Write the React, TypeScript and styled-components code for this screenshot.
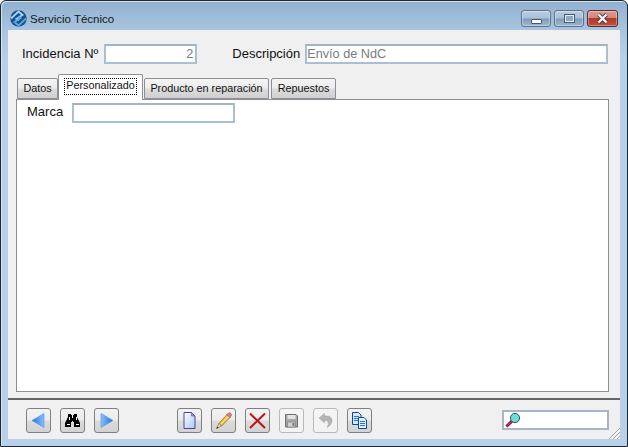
import React from "react";
import styled, { createGlobalStyle } from "styled-components";

const Global = createGlobalStyle`
  html, body { margin: 0; padding: 0; background: #fff; }
  body { width: 628px; height: 447px; overflow: hidden; font-family: "Liberation Sans", Arial, sans-serif; }
`;

const Win = styled.div`
  box-sizing: border-box;
  width: 628px;
  height: 447px;
  display: flex;
  flex-direction: column;
  border: 1px solid #1c2a33;
  border-radius: 6px 6px 0 0;
  background: linear-gradient(180deg, #92b0cf 0, #a9c5df 30px, #b9d1e8 60px, #b9d1e8 100%);
  box-shadow: inset 1px 1px 0 #d6e4f0;
  padding: 0 7px 7px;
`;

const TitleBar = styled.div`
  height: 29px;
  flex: none;
  display: flex;
  align-items: flex-start;
`;

const TitleLogo = styled.svg`
  width: 17px;
  height: 17px;
  margin: 9px 3px 0 2px;
  flex: none;
`;

const TitleText = styled.div`
  font-size: 11.5px;
  line-height: 14px;
  margin-top: 11px;
  color: #101820;
`;

const Caption = styled.div`
  margin-left: auto;
  display: flex;
  gap: 3px;
  margin-top: 9px;
  margin-right: 2px;
`;

const CapBtn = styled.div<{ $close?: boolean }>`
  box-sizing: border-box;
  width: ${(p) => (p.$close ? 31 : 30)}px;
  height: 17px;
  border: 1px solid ${(p) => (p.$close ? "#5a2a2e" : "#5d7288")};
  border-radius: 3px;
  background: ${(p) =>
    p.$close
      ? "linear-gradient(180deg,#dc9c90 0,#d08878 45%,#b53a26 50%,#b8513e 100%)"
      : "linear-gradient(180deg,#b9cde0 0,#a8c0d8 48%,#7f9cbb 52%,#9cb8d4 100%)"};
  box-shadow: inset 0 0 0 1px rgba(255, 255, 255, 0.35);
  display: flex;
  align-items: center;
  justify-content: center;
`;

const MinGlyph = styled.div`
  width: 9px;
  height: 3px;
  margin-top: 5px;
  background: #fff;
  border: 1px solid #46586c;
  border-radius: 1px;
`;

const MaxGlyph = styled.div`
  box-sizing: border-box;
  width: 11px;
  height: 9px;
  margin-top: -1px;
  border: 2px solid #e8eef4;
  outline: 1px solid #46586c;
  outline-offset: -1px;
  background: #8fa9c4;
`;

const Client = styled.div`
  flex: 1;
  position: relative;
  display: flex;
  flex-direction: column;
  background: #f0f0f0;
  min-height: 0;
`;

const HeaderRow = styled.div`
  height: 39px;
  flex: none;
  display: flex;
  align-items: flex-start;
  padding: 14px 12px 0 14px;
  box-sizing: border-box;
`;

const FieldLabel = styled.label<{ $gap: number; $lead?: number; $lh?: number }>`
  font-size: 13px;
  line-height: ${(p) => p.$lh ?? 19}px;
  color: #111;
  margin-left: ${(p) => p.$lead ?? 0}px;
  margin-right: ${(p) => p.$gap}px;
  white-space: nowrap;
`;

const Field = styled.div<{ $w: number; $right?: boolean }>`
  box-sizing: border-box;
  width: ${(p) => p.$w}px;
  height: 20px;
  flex: none;
  border: 2px solid #a9bfd8;
  border-top-color: #a3b2c6;
  background: #fff;
  color: #7c7c7c;
  font-size: 12.7px;
  line-height: 16px;
  padding: 0 ${(p) => (p.$right ? 2 : 0)}px 0 ${(p) => (p.$right ? 2 : 0)}px;
  text-align: ${(p) => (p.$right ? "right" : "left")};
`;

const TabStrip = styled.div`
  height: 30px;
  flex: none;
  display: flex;
  align-items: flex-end;
  padding-left: 9px;
  position: relative;
  z-index: 1;
`;

const Tab = styled.div<{ $w: number; $active?: boolean; $gap?: number }>`
  box-sizing: border-box;
  width: ${(p) => p.$w}px;
  height: ${(p) => (p.$active ? 26 : 21)}px;
  margin-left: ${(p) => p.$gap ?? 0}px;
  margin-bottom: ${(p) => (p.$active ? -1 : 0)}px;
  border: 1px solid #8e8e96;
  border-bottom: ${(p) => (p.$active ? "none" : "1px solid #8e8e96")};
  border-radius: 2px 2px 0 0;
  background: ${(p) =>
    p.$active ? "#fff" : "linear-gradient(180deg,#f4f4f4 0,#ececec 45%,#dcdcdc 55%,#cfcfcf 100%)"};
  font-size: 10.8px;
  color: #111;
  display: flex;
  justify-content: center;
  align-items: flex-start;
  padding-top: 3px;
  white-space: nowrap;
`;

const TabFocus = styled.span`
  border: 1px dotted #000;
  padding: 0 1px 2px;
  line-height: 13px;
`;

const Panel = styled.div`
  box-sizing: border-box;
  height: 293px;
  flex: none;
  margin: 0 11px 0 8px;
  border: 1px solid #8e8e96;
  background: #fff;
  padding: 3px 0 0 10px;
  display: flex;
  align-items: flex-start;
`;

const Divider = styled.div`
  flex: none;
  height: 2px;
  margin-top: 6px;
  background: #666;
`;

const Toolbar = styled.div`
  flex: 1;
  display: flex;
  align-items: flex-start;
  padding: 8px 11px 0 18px;
`;

const Group = styled.div<{ $ml?: number }>`
  display: flex;
  gap: 9px;
  margin-left: ${(p) => p.$ml ?? 0}px;
`;

const ToolBtn = styled.button<{ $disabled?: boolean }>`
  box-sizing: border-box;
  width: 25px;
  height: 25px;
  padding: 0;
  border: 1px solid ${(p) => (p.$disabled ? "#b8b8b8" : "#7f7f7f")};
  border-radius: 3px;
  background: ${(p) =>
    p.$disabled
      ? "linear-gradient(180deg,#f5f5f5 0,#f2f2f2 100%)"
      : "linear-gradient(180deg,#f2f2f2 0,#ececec 48%,#dcdcdc 52%,#d2d2d2 100%)"};
  display: flex;
  align-items: center;
  justify-content: center;
`;

const Search = styled.div`
  box-sizing: border-box;
  margin-left: auto;
  margin-top: 2px;
  width: 107px;
  height: 20px;
  border: 2px solid #a9b4c4;
  background: #fff;
  display: flex;
  align-items: center;
  padding-left: 1px;
`;

const Grip = styled.svg`
  position: absolute;
  right: 0;
  bottom: 0;
  width: 12px;
  height: 12px;
`;

const Ico = styled.svg`
  display: block;
  width: 21px;
  height: 21px;
`;

export default function App() {
  return (
    <>
      <Global />
      <Win>
        <TitleBar>
          <TitleLogo viewBox="0 0 17 17">
            <circle cx="8.5" cy="8.5" r="8.2" fill="#17508f" />
            <path d="M1 8.5 L8.5 1.5 L12.5 5 L6.5 9 L9 10.5" fill="none" stroke="#a9d4f2" strokeWidth="1.9" />
            <path d="M16 8.5 L8.5 15.5 L4.5 12 L10.5 8 L8 6.5" fill="none" stroke="#5aa8e0" strokeWidth="1.9" />
          </TitleLogo>
          <TitleText>Servicio Técnico</TitleText>
          <Caption>
            <CapBtn><MinGlyph /></CapBtn>
            <CapBtn><MaxGlyph /></CapBtn>
            <CapBtn $close>
              <svg width="13" height="11" viewBox="0 0 13 11">
                <path d="M2.5 1.5 L10.5 9.5 M10.5 1.5 L2.5 9.5" stroke="#4c3a40" strokeWidth="4" />
                <path d="M2.5 1.5 L10.5 9.5 M10.5 1.5 L2.5 9.5" stroke="#f4f4f6" strokeWidth="2.4" />
              </svg>
            </CapBtn>
          </Caption>
        </TitleBar>
        <Client>
          <HeaderRow>
            <FieldLabel $gap={6}>Incidencia Nº</FieldLabel>
            <Field $w={93} $right>2</Field>
            <FieldLabel $gap={5} $lead={35}>Descripción</FieldLabel>
            <Field $w={303}>Envío de NdC</Field>
          </HeaderRow>
          <TabStrip>
            <Tab $w={41}>Datos</Tab>
            <Tab $w={85} $active><TabFocus>Personalizado</TabFocus></Tab>
            <Tab $w={125} $gap={1}>Producto en reparación</Tab>
            <Tab $w={65} $gap={2}>Repuestos</Tab>
          </TabStrip>
          <Panel>
            <FieldLabel $gap={9} $lh={17}>Marca</FieldLabel>
            <Field $w={163} />
          </Panel>
          <Divider />
          <Toolbar>
            <Group>
              <ToolBtn aria-label="Anterior">
                <Ico viewBox="0 0 21 21">
                  <defs>
                    <linearGradient id="arrowL" x1="0" y1="0" x2="1" y2="0">
                      <stop offset="0" stopColor="#1f74ea" />
                      <stop offset="1" stopColor="#8cc0f6" />
                    </linearGradient>
                  </defs>
                  <path d="M4 10.5 L16 3.5 V17.5 Z" fill="url(#arrowL)" stroke="#4a90e6" strokeWidth="0.6" />
                </Ico>
              </ToolBtn>
              <ToolBtn aria-label="Buscar">
                <Ico viewBox="0 0 21 21">
                  <path d="M6 4h3v1h1v3h1V5h1V4h3v3l3 6v4h-6v-5h-1v-1h-1v1H9v5H3v-4l3-6z" fill="#000" />
                  <rect x="5" y="14" width="3" height="1" fill="#fff" />
                  <rect x="14" y="14" width="3" height="1" fill="#fff" />
                  <rect x="7" y="7" width="1" height="3" fill="#fff" />
                  <rect x="14" y="7" width="1" height="3" fill="#fff" />
                </Ico>
              </ToolBtn>
              <ToolBtn aria-label="Siguiente">
                <Ico viewBox="0 0 21 21">
                  <defs>
                    <linearGradient id="arrowR" x1="0" y1="0" x2="1" y2="0">
                      <stop offset="0" stopColor="#8cc0f6" />
                      <stop offset="1" stopColor="#1f74ea" />
                    </linearGradient>
                  </defs>
                  <path d="M17 10.5 L5 3.5 V17.5 Z" fill="url(#arrowR)" stroke="#4a90e6" strokeWidth="0.6" />
                </Ico>
              </ToolBtn>
            </Group>
            <Group $ml={58}>
              <ToolBtn aria-label="Nuevo">
                <Ico viewBox="0 0 21 21">
                  <defs>
                    <linearGradient id="doc" x1="0" y1="0" x2="1" y2="1">
                      <stop offset="0" stopColor="#fff" />
                      <stop offset="1" stopColor="#a8c8f0" />
                    </linearGradient>
                  </defs>
                  <path d="M5 2.5 H12.5 L16 6 V18.5 H5 Z" fill="url(#doc)" stroke="#5040a0" strokeWidth="1" />
                  <path d="M12.5 2.5 V6 H16 Z" fill="#8f9fe0" stroke="#5040a0" strokeWidth="0.6" />
                </Ico>
              </ToolBtn>
              <ToolBtn aria-label="Editar">
                <Ico viewBox="0 0 21 21">
                  <path d="M6 13.5 L14 4.5 L17 7.5 L8.5 16 Z" fill="#f6c04a" stroke="#7a5a20" strokeWidth="0.7" />
                  <path d="M8 14 L15.5 6" stroke="#fbe79a" strokeWidth="1" />
                  <path d="M14 4.5 L15.5 3 Q17 2.5 18 3.5 Q19 5 18 6 L17 7.5 Z" fill="#e8808a" stroke="#8a4a50" strokeWidth="0.6" />
                  <path d="M6 13.5 L8.5 16 L3.5 18.5 Z" fill="#f3dcae" stroke="#7a5a20" strokeWidth="0.6" />
                  <path d="M3.5 18.5 L4.3 16.5 L5.5 17.5 Z" fill="#222" />
                </Ico>
              </ToolBtn>
              <ToolBtn aria-label="Borrar">
                <Ico viewBox="0 0 21 21">
                  <path d="M3 3.5 L18 18 M18 3.5 L3 18" stroke="#c01018" strokeWidth="2" />
                </Ico>
              </ToolBtn>
              <ToolBtn $disabled aria-label="Guardar">
                <Ico viewBox="0 0 21 21">
                  <path d="M4.5 4.5 H15 L16.5 6 V17 H4.5 Z" fill="#a8a8a8" stroke="#6e6e6e" />
                  <rect x="6.5" y="5" width="8" height="4" fill="#e4e4e4" />
                  <rect x="6.5" y="12" width="8" height="5" fill="#d0d0d0" stroke="#777" strokeWidth="0.6" />
                  <rect x="11.5" y="13" width="2" height="3" fill="#777" />
                </Ico>
              </ToolBtn>
              <ToolBtn $disabled aria-label="Deshacer">
                <Ico viewBox="0 0 21 21">
                  <path d="M4 8 L9.5 3.5 V6 H13 Q17.5 7 17 11.5 Q16.5 15 12 17.5 Q14 14 13 12 Q12 10 9.5 10.5 V13 Z" fill="#b4b4b4" stroke="#a0a0a0" strokeWidth="0.5" />
                </Ico>
              </ToolBtn>
              <ToolBtn aria-label="Copiar">
                <Ico viewBox="0 0 21 21">
                  <path d="M3.5 2.5 H9.5 L12 5 V14.5 H3.5 Z" fill="#d6e8fa" stroke="#10449c" strokeWidth="1" />
                  <path d="M5 6.5h5M5 8.5h5M5 10.5h5" stroke="#2878d8" strokeWidth="1" />
                  <path d="M9.5 7.5 H15 L17.5 10 V18.5 H9.5 Z" fill="#e4f0fc" stroke="#10449c" strokeWidth="1" />
                  <path d="M11 11.5h5M11 13.5h5M11 15.5h5" stroke="#1878e0" strokeWidth="1" />
                </Ico>
              </ToolBtn>
            </Group>
            <Search>
              <svg width="16" height="16" viewBox="0 0 16 16">
                <path d="M1.5 14.5 L7 9" stroke="#50102c" strokeWidth="3" />
                <path d="M1.5 14.5 L7 9" stroke="#e81878" strokeWidth="1.4" />
                <circle cx="10" cy="6" r="4.6" fill="#6fdcdc" stroke="#2e5a5a" strokeWidth="1" />
              </svg>
            </Search>
          </Toolbar>
          <Grip viewBox="0 0 12 12">
            <path d="M1 12 L12 1 M5 12 L12 5 M9 12 L12 9" stroke="#a0a0a0" strokeWidth="1" />
            <path d="M2.5 12 L12 2.5 M6.5 12 L12 6.5 M10.5 12 L12 10.5" stroke="#fff" strokeWidth="1" />
          </Grip>
        </Client>
      </Win>
    </>
  );
}
